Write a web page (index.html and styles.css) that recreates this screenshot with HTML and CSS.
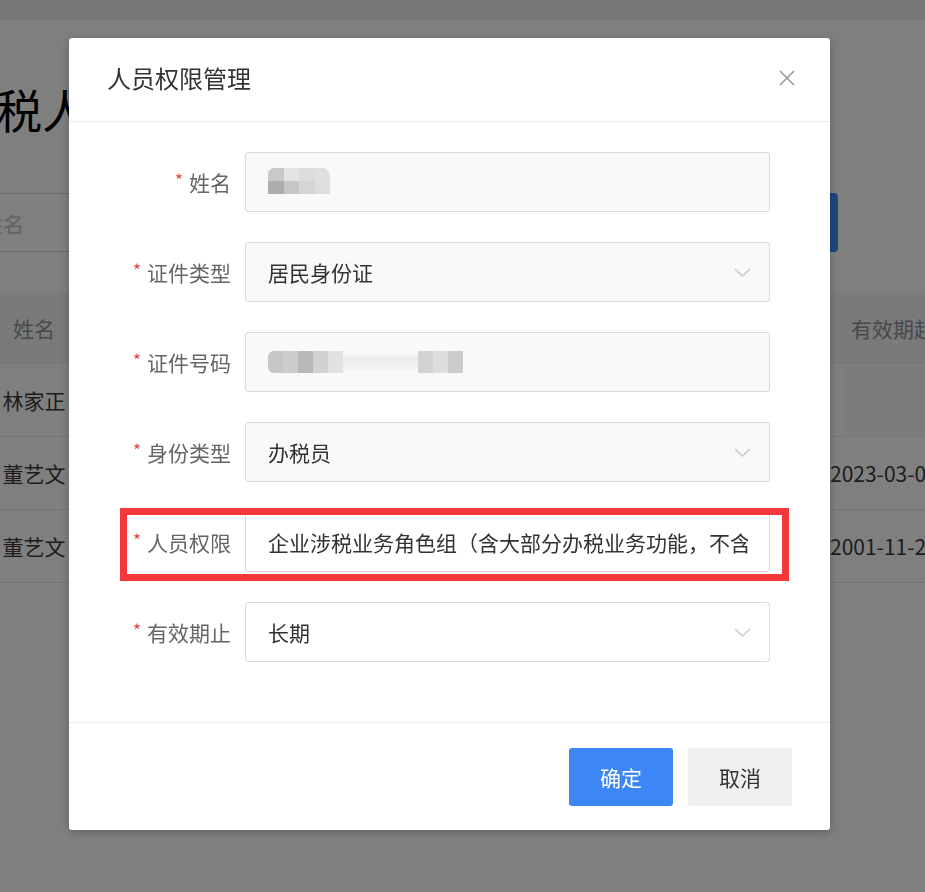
FILE: index.html
```html
<!DOCTYPE html>
<html lang="zh-CN">
<head>
<meta charset="utf-8">
<title>人员权限管理</title>
<link rel="stylesheet" href="styles.css">
</head>
<body>
<div class="page">
  <div class="topbar"></div>
  <h1 class="page-title">纳税人信息</h1>
  <div class="search">
    <div class="search-input">姓名</div>
    <div class="search-btn"></div>
  </div>
  <div class="table">
    <div class="tr th"><div class="td">姓名</div><div class="td"></div><div class="td">有效期起</div></div>
    <div class="tr"><div class="td">林家正</div><div class="td"></div><div class="td"><div class="empty-cell"></div></div></div>
    <div class="tr"><div class="td">董艺文</div><div class="td"></div><div class="td date">2023-03-01</div></div>
    <div class="tr"><div class="td">董艺文</div><div class="td"></div><div class="td date">2001-11-20</div></div>
  </div>
</div>

<div class="overlay">
  <div class="modal">
    <div class="modal-header">
      <div class="modal-title">人员权限管理</div>
      <svg class="close" width="18" height="18" viewBox="0 0 18 18"><path d="M2 2L16 16M16 2L2 16" stroke="#9a9a9a" stroke-width="1.6" fill="none"/></svg>
    </div>
    <div class="modal-body">
      <div class="form-row">
        <div class="label"><span class="req">*</span>姓名</div>
        <div class="field disabled">
          <div class="mosaic name-mosaic">
            <span class="c1"></span><span class="c2"></span><span class="c3"></span><span class="c4"></span>
            <span class="c5"></span><span class="c6"></span><span class="c7"></span><span class="c8"></span>
          </div>
        </div>
      </div>
      <div class="form-row">
        <div class="label"><span class="req">*</span>证件类型</div>
        <div class="field disabled">
          <span class="value">居民身份证</span>
          <svg class="arrow" width="17" height="9" viewBox="0 0 17 9"><polyline points="1,1 8.5,8 16,1" stroke="#c9c9c9" stroke-width="1.4" fill="none"/></svg>
        </div>
      </div>
      <div class="form-row">
        <div class="label"><span class="req">*</span>证件号码</div>
        <div class="field disabled">
          <div class="mosaic id-mosaic">
            <span class="d1"></span><span class="d2"></span><span class="d3"></span><span class="d4"></span><span class="d5"></span>
            <span class="d6"></span>
            <span class="d7"></span><span class="d8"></span><span class="d9"></span>
          </div>
        </div>
      </div>
      <div class="form-row">
        <div class="label"><span class="req">*</span>身份类型</div>
        <div class="field disabled">
          <span class="value">办税员</span>
          <svg class="arrow" width="17" height="9" viewBox="0 0 17 9"><polyline points="1,1 8.5,8 16,1" stroke="#c9c9c9" stroke-width="1.4" fill="none"/></svg>
        </div>
      </div>
      <div class="form-row highlighted">
        <div class="label"><span class="req">*</span>人员权限</div>
        <div class="field">
          <span class="value">企业涉税业务角色组（含大部分办税业务功能，不含开票等高风险业务）</span>
        </div>
        <div class="mark"></div>
      </div>
      <div class="form-row">
        <div class="label"><span class="req">*</span>有效期止</div>
        <div class="field">
          <span class="value">长期</span>
          <svg class="arrow" width="17" height="9" viewBox="0 0 17 9"><polyline points="1,1 8.5,8 16,1" stroke="#c9c9c9" stroke-width="1.4" fill="none"/></svg>
        </div>
      </div>
    </div>
    <div class="modal-footer">
      <div class="btn btn-primary">确定</div>
      <div class="btn btn-default">取消</div>
    </div>
  </div>
</div>
</body>
</html>
```

FILE: styles.css
```css
html, body {
  margin: 0;
  padding: 0;
  width: 925px;
  height: 892px;
  overflow: hidden;
  background: #ffffff;
  font-family: "Noto Sans CJK SC", "Microsoft YaHei", sans-serif;
}

.page {
  width: 956px;
}

.topbar {
  height: 20px;
  background: #ececec;
}

.page-title {
  margin: 65px 0 0 -50px;
  font-size: 46px;
  line-height: 46px;
  font-weight: 400;
  color: #000;
  white-space: nowrap;
}

.search {
  display: flex;
  gap: 8px;
  margin: 62px 0 0 -19px;
  height: 59px;
}

.search-input {
  width: 749px;
  box-sizing: border-box;
  border: 1px solid #d6d6d6;
  display: flex;
  align-items: center;
  font-size: 21px;
  color: #c0c4cc;
}

.search-btn {
  width: 100px;
  background: #3c8cff;
  border-radius: 4px;
}

.table {
  margin-top: 41px;
}

.tr {
  display: grid;
  grid-template-columns: 68px 762px 126px;
  height: 72px;
  border-bottom: 1px solid #e8e8e8;
  align-items: center;
  font-size: 21px;
  color: #3a3a3a;
}

.tr.th {
  height: 70px;
  background: #f4f4f4;
  color: #909399;
}

.td {
  text-align: center;
  white-space: nowrap;
  overflow: hidden;
}

.td.date {
  text-align: left;
  font-size: 21px;
}

.empty-cell {
  height: 70px;
  margin-left: 13px;
  background: #f9f9f9;
}

.overlay {
  position: fixed;
  inset: 0;
  background: rgba(0, 0, 0, 0.5);
  padding: 38px 0 0 69px;
  box-sizing: border-box;
}

.modal {
  width: 761px;
  background: #fff;
  border-radius: 3px;
  box-shadow: 0 2px 10px rgba(0, 0, 0, 0.25);
}

.modal-header {
  height: 83px;
  border-bottom: 1px solid #ebebeb;
  display: flex;
  align-items: center;
  justify-content: space-between;
  padding: 0 34px 0 38px;
}

.modal-title {
  font-size: 24px;
  color: #333;
  line-height: 30px;
  margin-top: -4px;
}

.close {
  display: block;
  margin-top: -4px;
}

.modal-body {
  padding: 30px 60px 60px 0;
  display: flex;
  flex-direction: column;
  gap: 30px;
}

.form-row {
  display: grid;
  grid-template-columns: 162px 525px;
  column-gap: 14px;
  height: 60px;
  position: relative;
}

.label {
  display: flex;
  justify-content: flex-end;
  align-items: center;
  font-size: 21px;
  color: #666;
  white-space: nowrap;
}

.req {
  color: #e8413e;
  font-size: 17px;
  margin-right: 6px;
  margin-bottom: 6px;
}

.field {
  box-sizing: border-box;
  height: 60px;
  border: 1px solid #dadada;
  border-radius: 3px;
  background: #fff;
  display: flex;
  align-items: center;
  padding: 0 18px 0 22px;
  font-size: 21px;
  color: #333;
  overflow: hidden;
  white-space: nowrap;
}

.field.disabled {
  background: #f9f9f9;
}

.highlighted .field {
  padding-right: 21px;
}

.value {
  flex: 1;
  overflow: hidden;
  white-space: nowrap;
}

.arrow {
  display: block;
  flex: none;
}

.mark {
  position: absolute;
  left: 51px;
  top: -4px;
  width: 669px;
  height: 73px;
  box-sizing: border-box;
  border: 7px solid #f5383c;
  pointer-events: none;
}

.mosaic {
  display: grid;
  filter: blur(0.6px);
}

.name-mosaic {
  grid-template-columns: repeat(4, 15.5px);
  grid-template-rows: 13px 13px;
  margin-top: -2px;
}

.name-mosaic .c1 { background: #c9c9c9; border-top-left-radius: 6px; }
.name-mosaic .c2 { background: #e4e4e4; }
.name-mosaic .c3 { background: #dcdcdc; }
.name-mosaic .c4 { background: #e0e0e0; border-top-right-radius: 8px; }
.name-mosaic .c5 { background: #adadad; }
.name-mosaic .c6 { background: #c6c6c6; }
.name-mosaic .c7 { background: #d5d5d5; }
.name-mosaic .c8 { background: #dedede; }

.id-mosaic {
  grid-template-columns: 15px 15px 15px 15px 15px 75px 15px 15px 15px;
  grid-template-rows: 22px;
  align-items: center;
}

.id-mosaic span { height: 22px; }
.id-mosaic .d1 { background: #c6c6c6; border-radius: 6px 0 0 6px; }
.id-mosaic .d2 { background: #cdcdcd; }
.id-mosaic .d3 { background: #b9b9b9; }
.id-mosaic .d4 { background: #d1d1d1; }
.id-mosaic .d5 { background: #e2e2e2; }
.id-mosaic .d6 { background: linear-gradient(#f7f7f7 0, #e9e9e9 30%, #eeeeee 60%, #f4f4f4 100%); height: 16px; }
.id-mosaic .d7 { background: #d2d2d2; }
.id-mosaic .d8 { background: #dddddd; }
.id-mosaic .d9 { background: #cccccc; }

.modal-footer {
  border-top: 1px solid #ebebeb;
  padding: 25px 38px 24px 0;
  display: flex;
  justify-content: flex-end;
  gap: 15px;
}

.btn {
  width: 104px;
  height: 58px;
  border-radius: 3px;
  display: flex;
  align-items: center;
  justify-content: center;
  font-size: 21px;
}

.btn-primary {
  background: #3d86f5;
  color: #fff;
}

.btn-default {
  background: #efefef;
  color: #333;
}
```
